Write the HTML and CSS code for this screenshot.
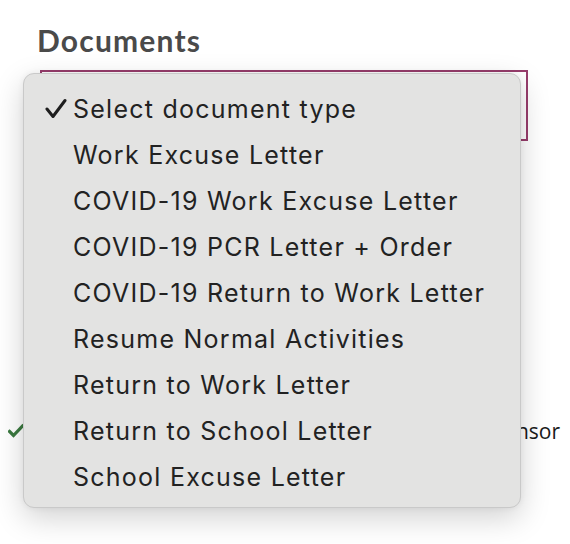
FILE: index.html
```html
<!DOCTYPE html>
<html>
<head>
<meta charset="utf-8">
<link rel="stylesheet" href="styles.css">
</head>
<body>
<div class="page">
  <h2 class="title">Documents</h2>
  <div class="select"></div>
  <div class="rows">
    <div class="row">
      <svg class="ok" width="16" height="16" viewBox="0 0 16 16"><path d="M1.5 8.5 L5.5 12.5 L14.5 3" fill="none" stroke="#3b7a40" stroke-width="3.2" stroke-linecap="square"/></svg>
      <span class="row-text">Letter from Sponsor</span>
    </div>
  </div>
  <div class="menu">
    <div class="item"><svg class="tick" width="22" height="22" viewBox="0 0 22 22"><path d="M2 11 L8 18.5 L20 2.5" fill="none" stroke="#1e1e1e" stroke-width="3" stroke-linecap="round" stroke-linejoin="round"/></svg>Select document type</div>
    <div class="item">Work Excuse Letter</div>
    <div class="item">COVID-19 Work Excuse Letter</div>
    <div class="item">COVID-19 PCR Letter + Order</div>
    <div class="item">COVID-19 Return to Work Letter</div>
    <div class="item">Resume Normal Activities</div>
    <div class="item">Return to Work Letter</div>
    <div class="item">Return to School Letter</div>
    <div class="item">School Excuse Letter</div>
  </div>
</div>
</body>
</html>
```
FILE: styles.css
```css
html, body {
  margin: 0;
  padding: 0;
  background: #ffffff;
}
.page {
  position: relative;
  width: 570px;
  height: 544px;
  overflow: hidden;
}
.title {
  margin: 0;
  padding: 22px 0 0 37px;
  font-family: Lato, "Noto Sans", sans-serif;
  font-weight: 700;
  font-size: 30px;
  line-height: 36px;
  letter-spacing: 1.2px;
  color: #4a4a4a;
}
.select {
  margin: 12px 0 0 40px;
  width: 484px;
  height: 67px;
  border: 2px solid #973d6c;
}
.rows {
  padding: 276px 0 0 8px;
}
.row {
  display: flex;
  align-items: center;
  gap: 10px;
  font-family: "Open Sans", "Liberation Sans", sans-serif;
  font-size: 21px;
  color: #1a1a1a;
  white-space: nowrap;
}
.ok {
  flex: none;
}
.row-text {
  display: block;
  width: 526px;
  text-align: right;
}
.menu {
  position: absolute;
  left: 23px;
  top: 73px;
  width: 496px;
  height: 421px;
  padding: 12px 0 0 0;
  box-sizing: content-box;
  background: #e3e3e2;
  border: 1px solid #c9c9c9;
  border-radius: 11px;
  box-shadow: 0 10px 30px rgba(0,0,0,0.18), 0 0 6px rgba(0,0,0,0.06);
}
.item {
  position: relative;
  height: 46px;
  line-height: 46px;
  padding-left: 49px;
  font-family: Inter, "Liberation Sans", sans-serif;
  font-size: 25px;
  letter-spacing: 1.25px;
  color: #222222;
  white-space: nowrap;
}
.tick {
  position: absolute;
  left: 21px;
  top: 12px;
}
```
